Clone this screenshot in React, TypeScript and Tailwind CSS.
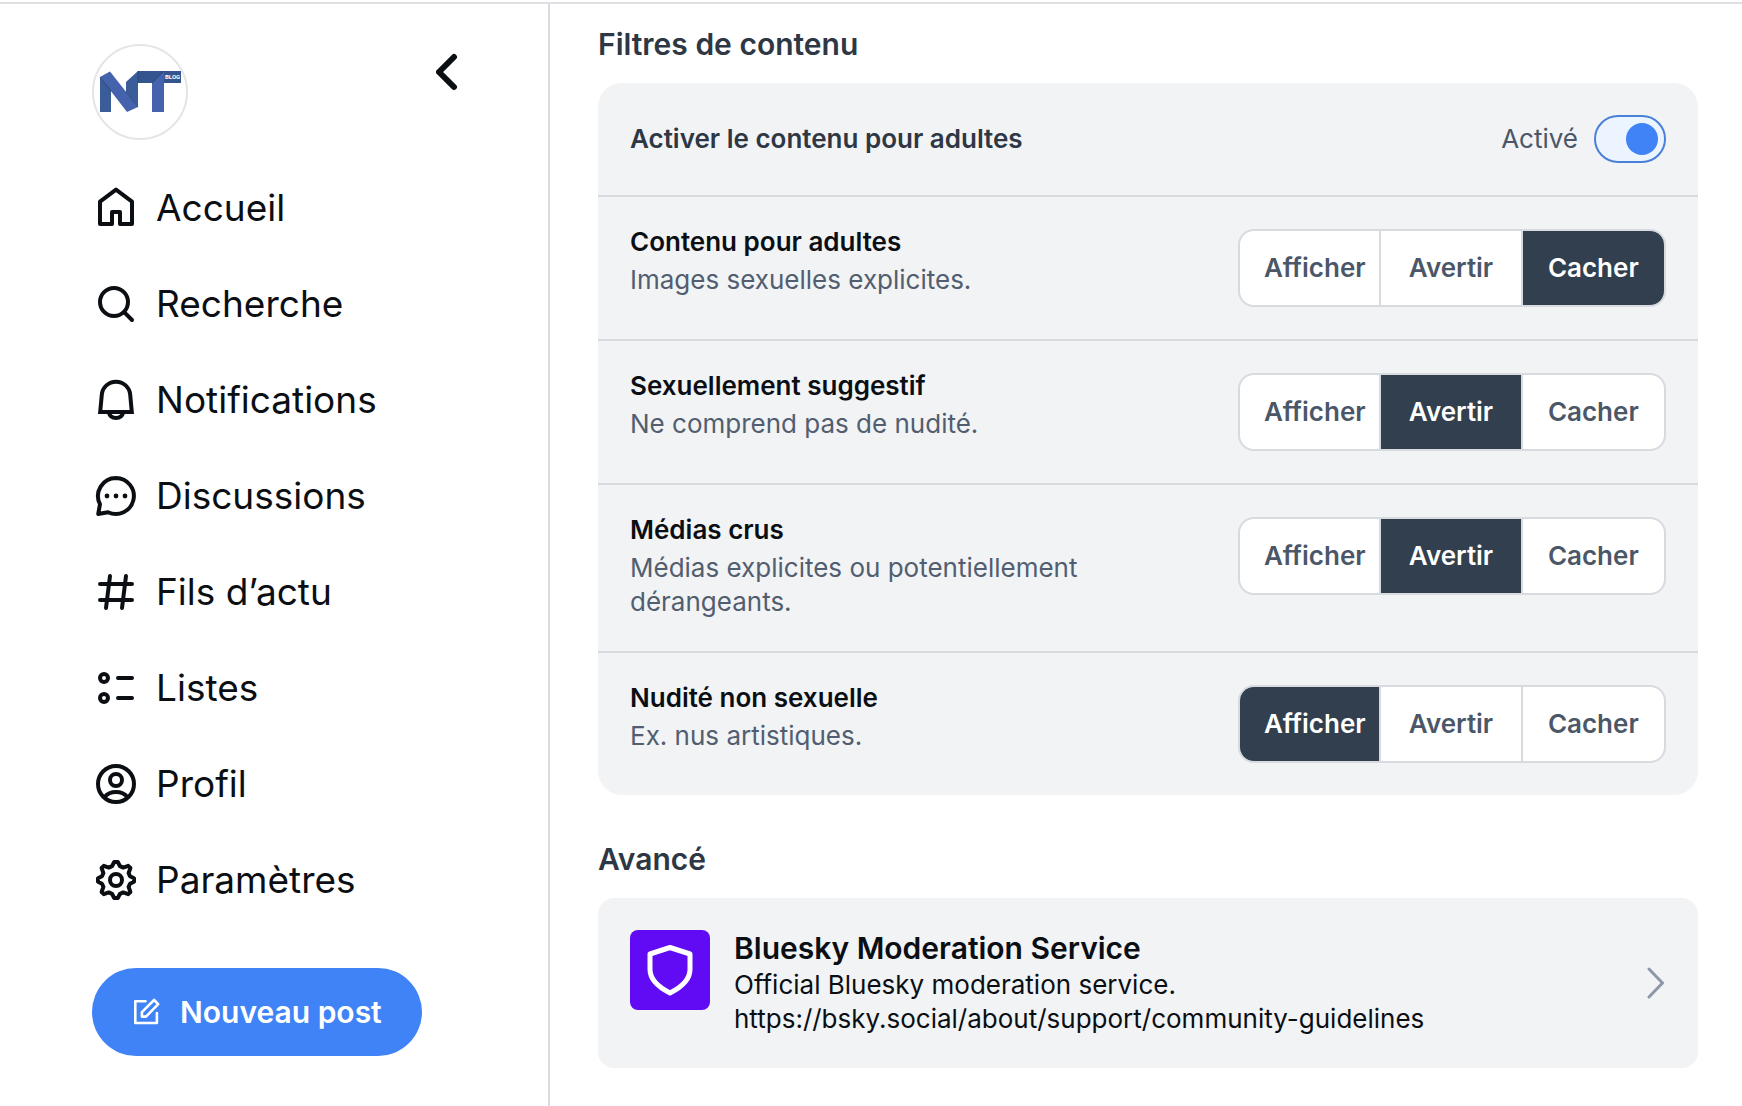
import React, { useState } from 'react';

const HomeIcon = () => (
  <svg viewBox="0 0 24 24" className="h-12 w-12 shrink-0" fill="none" stroke="currentColor" strokeWidth="2" strokeLinejoin="round">
    <path d="M4 8.8 12 2.8l8 6V20h-6v-6h-4v6H4Z" />
  </svg>
);

const SearchIcon = () => (
  <svg viewBox="0 0 24 24" className="h-12 w-12 shrink-0" fill="none" stroke="currentColor" strokeWidth="2" strokeLinecap="round">
    <circle cx="11" cy="11" r="7" />
    <path d="m16.2 16.2 3.8 3.8" />
  </svg>
);

const BellIcon = () => (
  <svg viewBox="0 0 24 24" className="h-12 w-12 shrink-0" fill="none" stroke="currentColor" strokeWidth="2">
    <path d="M4.9 9.3a7.13 7.13 0 0 1 14.2 0L19.9 18H4.1Z" />
    <path d="M8.4 18.3c.9 3.6 6.3 3.6 7.2 0" />
  </svg>
);

const MessageIcon = () => (
  <svg viewBox="0 0 24 24" className="h-12 w-12 shrink-0" fill="none" stroke="currentColor" strokeWidth="2" strokeLinejoin="round">
    <path d="M12 3a9 9 0 1 1-4 17.1L3.1 21l.9-4.9A9 9 0 0 1 12 3Z" />
    <g fill="currentColor" stroke="none">
      <circle cx="7.5" cy="12" r="1.2" />
      <circle cx="12" cy="12" r="1.2" />
      <circle cx="16.5" cy="12" r="1.2" />
    </g>
  </svg>
);

const HashIcon = () => (
  <svg viewBox="0 0 24 24" className="h-12 w-12 shrink-0" fill="none" stroke="currentColor" strokeWidth="2" strokeLinecap="round">
    <path d="M4 8h16M4 16h16M9 4 7 20M17 4l-2 16" />
  </svg>
);

const ListIcon = () => (
  <svg viewBox="0 0 24 24" className="h-12 w-12 shrink-0" fill="none" stroke="currentColor" strokeWidth="2" strokeLinecap="round">
    <circle cx="6" cy="7" r="2" />
    <circle cx="6" cy="17" r="2" />
    <path d="M13 7h7M13 17h7" />
  </svg>
);

const ProfileIcon = () => (
  <svg viewBox="0 0 24 24" className="h-12 w-12 shrink-0" fill="none" stroke="currentColor" strokeWidth="2">
    <circle cx="12" cy="12" r="9" />
    <circle cx="12" cy="10" r="3" />
    <path d="M6.2 18.6c1.4-1.7 3.5-2.6 5.8-2.6s4.4.9 5.8 2.6" />
  </svg>
);

const GearIcon = () => (
  <svg viewBox="0 0 24 24" className="h-12 w-12 shrink-0" fill="none" stroke="currentColor" strokeWidth="2" strokeLinejoin="round">
    <path d="M11.1 3h1.8L14 5.1l1.6.7 2.5-.9 1.1 1.1-.9 2.6.7 1.5 2 1v1.8l-2 1-.7 1.5.9 2.6-1.1 1.1-2.5-.9-1.600.7L12.900 21h-1.800L10 18.900l-1.600-.7-2.500.9L4.800 18l.9-2.600-.7-1.500-2-1v-1.800l2-1 .7-1.500L4.800 6l1.100-1.100 2.500.9 1.600-.7Z" />
    <circle cx="12" cy="12" r="3" />
  </svg>
);

const ComposeIcon = () => (
  <svg viewBox="-1.5 -1 28 28" className="h-7 w-7 shrink-0" fill="none" stroke="currentColor" strokeWidth="2.6" strokeLinejoin="round" strokeLinecap="round">
    <path d="M12 2.2H1.8V24h21.6V14" />
    <path d="M8.4 17.600v-4.400L20.600 1l4.100 4.100-12.200 12.500Z" />
  </svg>
);

const Logo = () => (
  <svg viewBox="0 0 96 96" className="h-24 w-24" role="img" aria-label="NT Blog">
    <circle cx="48" cy="48" r="47" fill="#fff" stroke="#e5e5e8" strokeWidth="2" />
    <path d="M8 33 19 46v22H8Z" fill="#3a5c98" />
    <path d="m34 38 12-11v36L34 48Z" fill="#3a5c98" />
    <path d="M46 27h43v12H46Z" fill="#33548c" />
    <path d="m60 39 12-12v41H60Z" fill="#4563ad" />
    <path d="m8 33 10-5.500 28 35.500-11 5Z" fill="#4563ad" />
    <path d="m8 33 11 14M34 48l12 15M60 39l12-12M46 27v12" fill="none" stroke="#27406f" strokeWidth="0.8" />
    <text x="73" y="35" fontSize="6" fontWeight="700" fill="#fff" fontFamily="Roboto, sans-serif">BLOG</text>
  </svg>
);

const navItems = [
  { label: 'Accueil', Icon: HomeIcon },
  { label: 'Recherche', Icon: SearchIcon },
  { label: 'Notifications', Icon: BellIcon },
  { label: 'Discussions', Icon: MessageIcon },
  { label: 'Fils d’actu', Icon: HashIcon },
  { label: 'Listes', Icon: ListIcon },
  { label: 'Profil', Icon: ProfileIcon },
  { label: 'Paramètres', Icon: GearIcon },
];

const choices = ['Afficher', 'Avertir', 'Cacher'];

const filters = [
  { title: 'Contenu pour adultes', description: 'Images sexuelles explicites.', initial: 'Cacher' },
  { title: 'Sexuellement suggestif', description: 'Ne comprend pas de nudité.', initial: 'Avertir' },
  { title: 'Médias crus', description: 'Médias explicites ou potentiellement dérangeants.', initial: 'Avertir' },
  { title: 'Nudité non sexuelle', description: 'Ex. nus artistiques.', initial: 'Afficher' },
];

const Sidebar = () => (
  <aside className="w-[550px] shrink-0 border-r-2 border-[#d9dcdf] pt-10 pl-[92px]">
    <div className="flex items-start justify-between pr-[88px]">
      <a href="#profil">
        <Logo />
      </a>
      <button aria-label="Retour" className="pt-2">
        <svg viewBox="0 0 24 40" className="h-10 w-6" fill="none" stroke="currentColor" strokeWidth="6" strokeLinecap="round" strokeLinejoin="round">
          <path d="M18 5 3 20l15 15" />
        </svg>
      </button>
    </div>
    <nav className="pt-5">
      {navItems.map(({ label, Icon }) => (
        <a key={label} href="#" className="flex h-24 items-center gap-4">
          <Icon />
          <span className="text-[37px] leading-[48px]">{label}</span>
        </a>
      ))}
    </nav>
    <button className="mt-10 flex h-[88px] items-center gap-5 rounded-full bg-[#3f83f7] px-10 text-[30px] font-semibold text-white">
      <ComposeIcon />
      Nouveau post
    </button>
  </aside>
);

const FilterRow = ({ title, description, initial }: { title: string; description: string; initial: string }) => {
  const [value, setValue] = useState(initial);

  return (
    <div className="flex items-start justify-between gap-8 border-t-2 border-[#d7dbe0] p-8">
      <div className="flex max-w-[500px] flex-col gap-2">
        <h3 className="text-[26px] leading-[26px] font-semibold">{title}</h3>
        <p className="text-[26px] leading-[34px] text-[#525e70]">{description}</p>
      </div>
      <div role="group" aria-label={title} className="grid h-[78px] w-[428px] shrink-0 grid-cols-3 overflow-hidden rounded-2xl border-2 border-[#d7dbe0] bg-white">
        {choices.map((choice) => (
          <button
            key={choice}
            aria-pressed={choice === value}
            onClick={() => setValue(choice)}
            className={`min-w-0 border-[#d7dbe0] pb-0.5 text-[26px] font-semibold not-last:border-r-2 first:pl-6 first:text-left ${
              choice === value ? 'bg-[#323f4e] text-white' : 'text-[#4b5768]'
            }`}
          >
            {choice}
          </button>
        ))}
      </div>
    </div>
  );
};

const App = () => {
  const [adult, setAdult] = useState(true);

  return (
    <div className="min-h-screen bg-white pt-0.5 font-[Inter,sans-serif] text-[#0b0f14]">
      <div className="flex min-h-[calc(100vh-2px)] border-t-2 border-[#dfe0e3]">
        <Sidebar />
        <main className="min-w-0 flex-1 pt-5 pr-11 pl-12">
          <h2 className="text-[30px] leading-10 font-semibold text-[#2e3744]">Filtres de contenu</h2>
          <section className="mt-[19px] rounded-3xl bg-[#f1f3f5]">
            <div className="flex items-center justify-between p-8">
              <h3 className="text-[26px] leading-[34px] font-semibold text-[#2e3744]">Activer le contenu pour adultes</h3>
              <label className="flex items-center gap-4 text-[26px] leading-[34px] text-[#4b5768]">
                {adult ? 'Activé' : 'Désactivé'}
                <input type="checkbox" role="switch" className="peer sr-only" checked={adult} onChange={(e) => setAdult(e.target.checked)} />
                <span className="flex h-12 w-[72px] items-center rounded-full border-2 border-[#4a80d8] bg-[#ecf5ff] px-1.5 peer-checked:justify-end">
                  <span className="h-8 w-8 rounded-full bg-[#3f83f7]" />
                </span>
              </label>
            </div>
            {filters.map((filter) => (
              <FilterRow key={filter.title} {...filter} />
            ))}
          </section>

          <h2 className="mt-11 text-[30px] leading-10 font-semibold text-[#2e3744]">Avancé</h2>
          <a href="#moderation" className="mt-[19px] flex items-start rounded-2xl bg-[#f1f3f5] p-8">
            <span className="flex h-20 w-20 shrink-0 items-center justify-center rounded-lg bg-[#610bf5]">
              <svg viewBox="0 0 24 24" className="h-15 w-15" fill="none" stroke="#fff" strokeWidth="2" strokeLinejoin="round">
                <path d="M12 3 4 5.6v6.2c0 4.3 3.3 7 8 9.4 4.7-2.4 8-5.1 8-9.4V5.6Z" />
              </svg>
            </span>
            <span className="min-w-0 flex-1 pl-6">
              <span className="mb-0.5 block text-[30px] leading-9 font-semibold">Bluesky Moderation Service</span>
              <span className="block text-[26px] leading-[34px]">
                Official Bluesky moderation service.
                <br />
                https://bsky.social/about/support/community-guidelines
              </span>
            </span>
            <svg viewBox="0 0 20 32" className="h-8 w-5 shrink-0 self-center" fill="none" stroke="#8e97a8" strokeWidth="3" strokeLinecap="round" strokeLinejoin="round">
              <path d="m3 2 13.5 14L3 30" />
            </svg>
          </a>
        </main>
      </div>
    </div>
  );
};

export default App;
